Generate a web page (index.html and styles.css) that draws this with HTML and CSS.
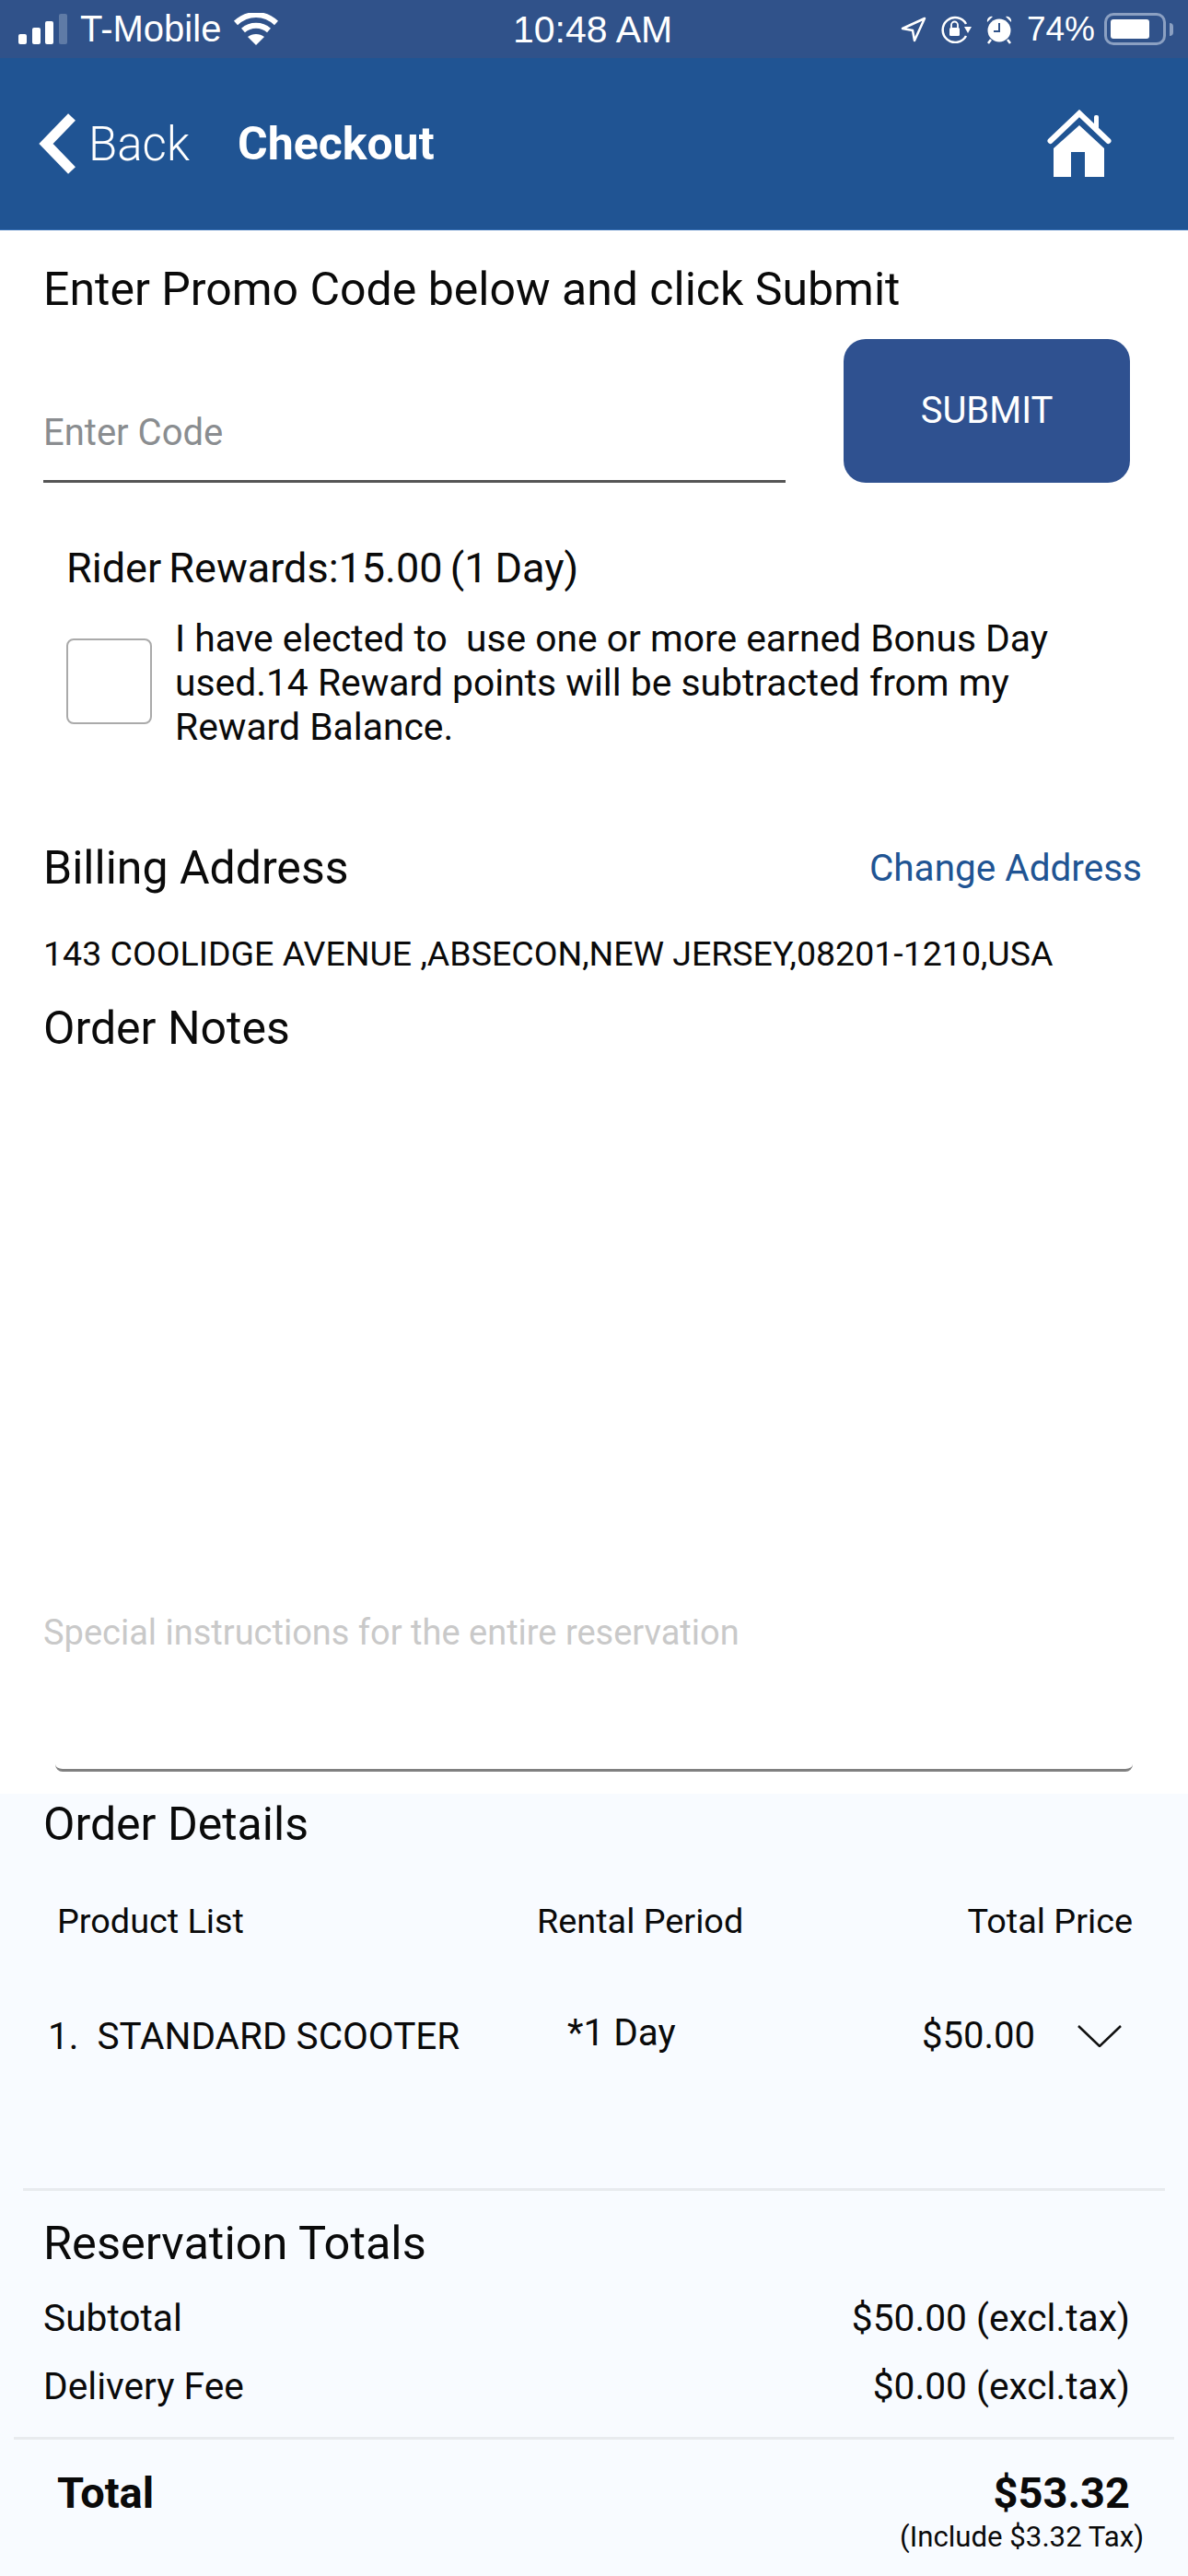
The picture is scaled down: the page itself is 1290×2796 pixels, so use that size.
FILE: index.html
```html
<!DOCTYPE html>
<html lang="en">

<head>
    <meta charset="UTF-8">
    <title>Checkout</title>
    <link rel="stylesheet" href="styles.css">
</head>

<body>
    <div class="status-bar">
        <div class="status-left">
            <svg class="signal" width="54" height="33" viewBox="0 0 54 33">
                <rect x="0" y="22" width="9" height="11" rx="2" fill="#fff" />
                <rect x="15" y="15" width="9" height="18" rx="2" fill="#fff" />
                <rect x="29" y="8" width="9" height="25" rx="2" fill="#fff" />
                <rect x="44" y="0" width="9" height="33" rx="2" fill="#5f7ba6" />
            </svg>
            <span>T-Mobile</span>
            <svg class="wifi" width="48" height="36" viewBox="0 0 48 36">
                <path d="M2 11 C15 -1 33 -1 46 11" fill="none" stroke="#fff" stroke-width="6" />
                <path d="M10 19 C18 12 30 12 38 19" fill="none" stroke="#fff" stroke-width="6" />
                <path d="M24 35 L15 26 C20 22 28 22 33 26 Z" fill="#fff" />
            </svg>
        </div>
        <div class="status-time">10:48 AM</div>
        <div class="status-right">
            <svg width="28" height="28" viewBox="0 0 28 28">
                <path d="M26 2 L2 13 L13 15 L15 26 Z" fill="none" stroke="#fff" stroke-width="2.5" stroke-linejoin="round" />
            </svg>
            <svg width="34" height="30" viewBox="0 0 34 30">
                <path d="M28 9 A13.5 13.5 0 1 0 28 22" fill="none" stroke="#fff" stroke-width="2.5" />
                <path d="M26 12 L34 12 L30 19 Z" fill="#fff" />
                <rect x="10" y="13" width="11" height="9" rx="1.5" fill="#fff" />
                <path d="M12 13 V10 A3.5 3.5 0 0 1 19 10 V13" fill="none" stroke="#fff" stroke-width="1.8" />
            </svg>
            <svg width="30" height="32" viewBox="0 0 30 32">
                <circle cx="15" cy="17" r="12.5" fill="#fff" />
                <path d="M15 9 V18 H9" fill="none" stroke="#30528a" stroke-width="2" />
                <path d="M2 8 A5 5 0 0 1 8 2 Z M28 8 A5 5 0 0 0 22 2 Z" fill="#fff" />
                <path d="M6 27 L3 31 M24 27 L27 31" stroke="#fff" stroke-width="2.5" />
            </svg>
            <span class="battery-pct">74%</span>
            <div class="battery">
                <div class="battery-fill"></div>
            </div>
            <div class="battery-nub"></div>
        </div>
    </div>

    <div class="nav-bar">
        <svg class="back-icon" width="42" height="66" viewBox="0 0 42 66">
            <path d="M36 4 L8 33 L36 62" fill="none" stroke="#fff" stroke-width="11" />
        </svg>
        <span class="back-label">Back</span>
        <span class="nav-title">Checkout</span>
        <svg class="home-icon" width="70" height="74" viewBox="0 0 70 74">
            <path d="M3.5 34 L35 4 L66.5 34" fill="none" stroke="#fff" stroke-width="6" stroke-linecap="round" />
            <rect x="51" y="6" width="5" height="18" rx="2" fill="#fff" />
            <path d="M35 17 L62 42 V73 H41 V46 H26 V73 H7 V42 Z" fill="#fff" />
        </svg>
    </div>

    <div class="heading promo-heading">Enter Promo Code below and click Submit</div>
    <div class="promo-row">
        <div class="promo-input">Enter Code</div>
        <button class="submit-btn">SUBMIT</button>
    </div>

    <div class="rewards-title">Rider Rewards:15.00 (1 Day)</div>
    <div class="rewards-row">
        <div class="checkbox"></div>
        <p class="rewards-text">I have elected to&nbsp; use one or more earned Bonus Day used.14 Reward points will be subtracted from my Reward Balance.</p>
    </div>

    <div class="billing-row">
        <div class="heading">Billing Address</div>
        <a class="change-link">Change Address</a>
    </div>
    <div class="address">143 COOLIDGE AVENUE ,ABSECON,NEW JERSEY,08201-1210,USA</div>
    <div class="heading notes-heading">Order Notes</div>
    <div class="notes-box">Special instructions for the entire reservation</div>

    <div class="details">
        <div class="heading">Order Details</div>
        <div class="product-head">
            <span>Product List</span>
            <span>Rental Period</span>
            <span>Total Price</span>
        </div>
        <div class="product-row">
            <span class="product-name"><span>1.</span><span>STANDARD SCOOTER</span></span>
            <span class="product-days">*1 Day</span>
            <span class="product-price">$50.00
                <svg width="48" height="24" viewBox="0 0 48 24">
                    <path d="M1 1 L24 23 L47 1" fill="none" stroke="#111" stroke-width="2.5" />
                </svg>
            </span>
        </div>
        <div class="divider first"></div>

        <div class="heading totals-heading">Reservation Totals</div>
        <div class="totals-row">
            <span>Subtotal</span>
            <span>$50.00 (excl.tax)</span>
        </div>
        <div class="totals-row">
            <span>Delivery Fee</span>
            <span>$0.00 (excl.tax)</span>
        </div>
        <div class="divider second"></div>

        <div class="grand-total">
            <span class="grand-label">Total</span>
            <div class="grand-amount">
                <div class="grand-price">$53.32</div>
                <div class="grand-tax">(Include $3.32 Tax)</div>
            </div>
        </div>
    </div>
</body>

</html>
```

FILE: styles.css
```css
body {
    margin: 0;
    width: 1290px;
    height: 2796px;
    overflow: hidden;
    background-color: #fff;
    color: #0a0a0a;
    font-family: Roboto, "Liberation Sans", sans-serif;
}

.status-bar {
    display: flex;
    align-items: center;
    justify-content: space-between;
    height: 63px;
    padding: 0 16px 0 20px;
    background-color: #30528a;
    color: #fff;
    font-family: "Liberation Sans", sans-serif;
    font-size: 37px;
    position: relative;
}

.status-left,
.status-right {
    display: flex;
    align-items: center;
}

.status-left span {
    margin-left: 13px;
    margin-right: 14px;
    font-size: 40px;
}

.status-time {
    position: absolute;
    left: 557px;
    top: 9px;
    font-size: 41px;
}

.status-right {
    gap: 15px;
}

.battery-pct {
    margin-right: -5px;
}

.battery {
    box-sizing: border-box;
    width: 67px;
    height: 35px;
    padding: 4px;
    border: 3px solid #8ba0c2;
    border-radius: 10px;
}

.battery-fill {
    width: 42px;
    height: 21px;
    background-color: #fff;
    border-radius: 3px;
}

.battery-nub {
    width: 4px;
    height: 14px;
    margin-left: -11px;
    background-color: #8ba0c2;
    border-radius: 0 4px 4px 0;
}

.nav-bar {
    display: flex;
    align-items: center;
    height: 186px;
    padding: 0 83px 0 42px;
    background-color: #205493;
    border-bottom: 1px solid #3a72b8;
    color: #fff;
}

.back-label {
    margin-left: 12px;
    font-size: 51px;
    font-weight: 300;
}

.nav-title {
    margin-left: 52px;
    font-size: 50px;
    font-weight: 700;
}

.home-icon {
    margin-left: auto;
}

.heading {
    font-size: 50px;
    line-height: 60px;
}

.promo-heading {
    margin: 34px 0 0 47px;
}

.promo-row {
    display: flex;
    align-items: flex-end;
    margin: 24px 0 0 47px;
}

.promo-input {
    box-sizing: border-box;
    width: 806px;
    height: 116px;
    padding-top: 39px;
    border-bottom: 3px solid #555;
    color: #8a8d90;
    font-size: 40px;
    line-height: 46px;
}

.submit-btn {
    width: 311px;
    height: 156px;
    margin-left: 63px;
    padding: 0 0 1px;
    border: 0;
    border-radius: 24px;
    background-color: #2f5190;
    color: #fff;
    font-family: Roboto, sans-serif;
    font-size: 40px;
}

.rewards-title {
    margin: 65px 0 0 72px;
    font-size: 45px;
    line-height: 56px;
    word-spacing: -3px;
}

.rewards-row {
    display: flex;
    margin: 24px 125px 0 72px;
}

.checkbox {
    box-sizing: border-box;
    flex-shrink: 0;
    width: 93px;
    height: 93px;
    margin-top: 24px;
    border: 2px solid #aaa;
    border-radius: 8px;
}

.rewards-text {
    margin: 0 0 0 25px;
    font-size: 40.8px;
    line-height: 48px;
}

.billing-row {
    display: flex;
    align-items: center;
    justify-content: space-between;
    margin: 99px 50px 0 47px;
}

.change-link {
    color: #205493;
    font-size: 40.5px;
}

.address {
    margin: 40px 0 0 47px;
    font-size: 37.5px;
    line-height: 46px;
}

.notes-heading {
    margin: 28px 0 0 47px;
}

.notes-box {
    box-sizing: border-box;
    display: flex;
    align-items: flex-end;
    width: 1170px;
    height: 777px;
    margin-left: 60px;
    padding-bottom: 125px;
    border-bottom: 3px solid #808080;
    border-radius: 0 0 8px 8px;
    color: #c9c9c9;
    font-size: 38px;
    line-height: 46px;
    text-indent: -13px;
}

.details {
    height: 849px;
    margin-top: 24px;
    padding: 3px 15px 0 47px;
    background-color: #f8fbff;
}

.product-head,
.product-row {
    display: grid;
    font-size: 38px;
    line-height: 46px;
}

.product-head {
    grid-template-columns: 521px 1fr auto;
    margin: 52px 45px 0 15px;
    font-size: 37.8px;
}

.product-row {
    grid-template-columns: 564px 1fr auto;
    margin: 79px 57px 0 5px;
    font-size: 40.5px;
}

.product-name {
    display: flex;
    gap: 20px;
}

.product-days {
    margin-top: -4px;
}

.product-price {
    display: flex;
    align-items: center;
    gap: 46px;
    font-size: 40px;
}

.divider {
    height: 3px;
    background-color: #e8ebee;
}

.divider.first {
    margin: 142px 10px 0 -22px;
}

.divider.second {
    margin: 32px 0 0 -32px;
}

.totals-heading {
    margin-top: 27px;
    font-size: 50.5px;
}

.totals-row {
    display: flex;
    justify-content: space-between;
    margin: 28px 48px 0 0;
    font-size: 40.7px;
    line-height: 46px;
}

.grand-total {
    display: flex;
    justify-content: space-between;
    margin: 28px 48px 0 15px;
    font-weight: 700;
}

.grand-label,
.grand-price {
    font-size: 47px;
    line-height: 60px;
}

.grand-amount {
    text-align: right;
}

.grand-tax {
    margin-right: -15px;
    font-size: 31.2px;
    font-weight: 400;
    line-height: 36px;
}
```
